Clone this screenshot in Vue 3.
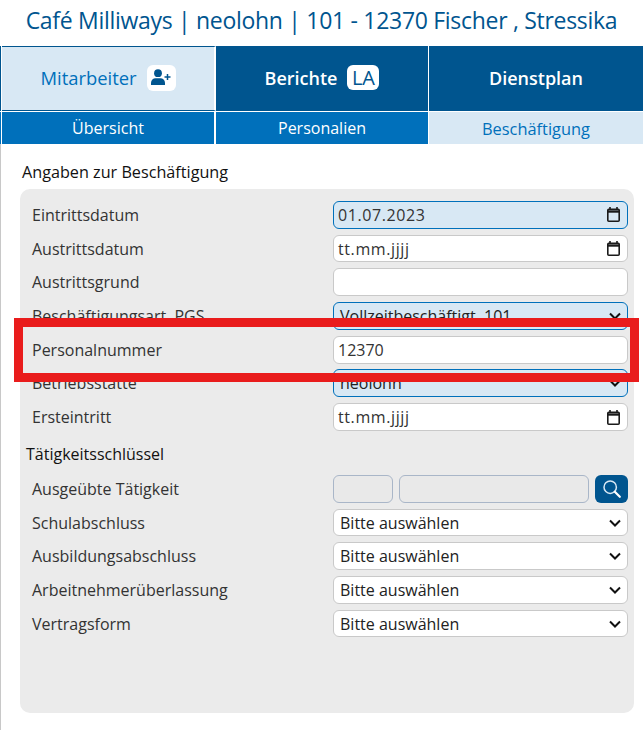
<script setup>
const mainTabs = [
  { label: 'Mitarbeiter', active: true, icon: 'user' },
  { label: 'Berichte', badge: 'LA' },
  { label: 'Dienstplan' }
]
const subTabs = [
  { label: 'Übersicht' },
  { label: 'Personalien' },
  { label: 'Beschäftigung', active: true }
]
const mainRows = [
  { label: 'Eintrittsdatum', value: '01.07.2023', icon: 'date', changed: true },
  { label: 'Austrittsdatum', value: 'tt.mm.jjjj', icon: 'date' },
  { label: 'Austrittsgrund', value: '' },
  { label: 'Beschäftigungsart, PGS', value: 'Vollzeitbeschäftigt, 101', icon: 'select', changed: true },
  { label: 'Personalnummer', value: '12370' },
  { label: 'Betriebsstätte', value: 'neolohn', icon: 'select', changed: true },
  { label: 'Ersteintritt', value: 'tt.mm.jjjj', icon: 'date' }
]
const keyRows = ['Schulabschluss', 'Ausbildungsabschluss', 'Arbeitnehmerüberlassung', 'Vertragsform']
</script>

<template>
  <div class="page">
    <h1 class="title">Café Milliways | neolohn | 101 - 12370 Fischer , Stressika</h1>

    <nav class="tabs main-tabs">
      <div v-for="tab in mainTabs" :key="tab.label" class="tab" :class="{ active: tab.active }">
        <span>{{ tab.label }}</span>
        <span v-if="tab.icon" class="badge">
          <svg width="20" height="17" viewBox="0 0 20 17">
            <circle cx="7" cy="4.200" r="3.900" fill="#00558f" />
            <path d="M0 16v-2C0 11 2.200 9.300 4.500 9.300h5C11.800 9.300 14 11 14 14v2z" fill="#00558f" />
            <path d="M16.500 5v6M13.500 8h6" stroke="#00558f" stroke-width="1.500" />
          </svg>
        </span>
        <span v-if="tab.badge" class="badge text-badge">{{ tab.badge }}</span>
      </div>
    </nav>
    <nav class="tabs sub-tabs">
      <div v-for="tab in subTabs" :key="tab.label" class="tab" :class="{ active: tab.active }">{{ tab.label }}</div>
    </nav>

    <div class="content">
      <h2 class="section-title">Angaben zur Beschäftigung</h2>
      <div class="panel">
        <div v-for="row in mainRows" :key="row.label" class="row">
          <span class="label">{{ row.label }}</span>
          <div class="field" :class="{ changed: row.changed, 'is-select': row.icon === 'select', 'is-date': row.icon === 'date' }">
            <span>{{ row.value }}</span>
            <svg v-if="row.icon === 'date'" width="13" height="15" viewBox="0 0 13 15">
              <path d="M3 0v3M10 0v3" stroke="#1a1a1a" stroke-width="1.600" />
              <rect x="0.800" y="2.300" width="11.400" height="11.900" rx="1" fill="none" stroke="#1a1a1a" stroke-width="1.600" />
              <path d="M1 4.500h11" stroke="#1a1a1a" stroke-width="2.400" />
            </svg>
            <svg v-if="row.icon === 'select'" class="chevron" width="12" height="8" viewBox="0 0 12 8">
              <path d="M1 1.500l5 5 5-5" fill="none" stroke="#111" stroke-width="2" />
            </svg>
          </div>
        </div>

        <h3 class="sub-title">Tätigkeitsschlüssel</h3>

        <div class="row">
          <span class="label">Ausgeübte Tätigkeit</span>
          <div class="search-group">
            <div class="disabled small"></div>
            <div class="disabled wide"></div>
            <div class="search-btn">
              <svg width="18" height="18" viewBox="0 0 18 18">
                <circle cx="7.200" cy="7.200" r="6.200" fill="none" stroke="#d8e8f4" stroke-width="1.500" />
                <path d="M11.800 11.800l5 5" stroke="#fff" stroke-width="2.200" stroke-linecap="round" />
              </svg>
            </div>
          </div>
        </div>
        <div v-for="label in keyRows" :key="label" class="row">
          <span class="label">{{ label }}</span>
          <div class="field is-select">
            <span>Bitte auswählen</span>
            <svg class="chevron" width="12" height="8" viewBox="0 0 12 8">
              <path d="M1 1.500l5 5 5-5" fill="none" stroke="#111" stroke-width="2" />
            </svg>
          </div>
        </div>
      </div>
    </div>

    <div class="highlight"></div>
  </div>
</template>

<style>
html, body {
  margin: 0;
  background: #fff;
}
</style>

<style scoped>
.page {
  position: relative;
  width: 643px;
  height: 730px;
  overflow: hidden;
  font-family: "Open Sans", "Noto Sans", sans-serif;
  color: #222;
}

.title {
  margin: 0;
  height: 46px;
  line-height: 41px;
  font-size: 23px;
  font-weight: 400;
  letter-spacing: -0.3px;
  text-align: center;
  color: #00558f;
  white-space: nowrap;
}

.tabs {
  display: grid;
  grid-template-columns: 214px 213px 214px;
  padding-left: 1px;
}

.tabs .tab:nth-child(1) {
  border-right: 2px solid #fff;
}

.tabs .tab:nth-child(2) {
  border-right: 1px solid #fff;
}

.main-tabs {
  height: 65px;
  border-left: 1px solid #00558f;
}

.main-tabs .tab {
  display: flex;
  align-items: center;
  justify-content: center;
  gap: 10px;
  padding-bottom: 2px;
  box-sizing: border-box;
  background: #00558f;
  color: #fff;
  font-size: 18px;
  font-weight: 600;
}

.main-tabs .tab.active {
  background: #d8e8f4;
  color: #0070bb;
  font-size: 18.400px;
  font-weight: 400;
  border-top: 1px solid #00558f;
  border-bottom: 1px solid #00558f;
}

.badge {
  display: flex;
  align-items: center;
  justify-content: center;
  width: 29px;
  height: 26px;
  border-radius: 6px;
  background: #fff;
  color: #00558f;
  font-weight: 400;
  font-size: 20px;
}

.text-badge {
  width: 32px;
  height: 25px;
}

.sub-tabs {
  height: 32px;
  margin-top: 1px;
  border-left: 1px solid #0070bb;
}

.sub-tabs .tab {
  display: flex;
  align-items: center;
  justify-content: center;
  background: #0070bb;
  color: #fff;
  font-size: 16px;
}

.sub-tabs .tab.active {
  background: #d8e8f4;
  color: #0070bb;
  font-size: 16.400px;
}

.content {
  height: 586px;
  padding: 18px 9px 0 20px;
  box-sizing: border-box;
  border-left: 1px solid #c8c8c8;
}

.section-title {
  margin: 0 0 7px 1px;
  height: 20px;
  line-height: 20px;
  font-size: 16.200px;
  font-weight: 400;
  color: #111;
}

.panel {
  height: 524px;
  margin-left: -1px;
  padding: 12px 6px 0 12px;
  box-sizing: border-box;
  background: #ebebeb;
  border-radius: 10px;
}

.row {
  display: flex;
  align-items: center;
  justify-content: space-between;
  height: 27.800px;
  margin-bottom: 5.900px;
}

.label {
  font-size: 16px;
  color: #333;
}

.field {
  display: flex;
  align-items: center;
  justify-content: space-between;
  width: 295px;
  height: 100%;
  box-sizing: border-box;
  padding: 0 7px 0 4px;
  background: #fff;
  border: 1px solid #c9c9c9;
  border-radius: 6px;
  font-size: 16px;
  color: #333;
}

.field.is-date {
  letter-spacing: 0.6px;
}

.field.is-select {
  padding: 0 6px 0 6px;
  color: #222;
}

.field.changed {
  background: #d8e8f4;
  border-color: #0070bb;
}

.sub-title {
  margin: 13px 0 11px -6px;
  height: 20px;
  line-height: 20px;
  font-size: 16px;
  font-weight: 400;
  color: #111;
}

.search-group {
  display: flex;
  gap: 6px;
  width: 295px;
  height: 100%;
}

.disabled {
  box-sizing: border-box;
  border: 1px solid #a9b6c8;
  border-radius: 6px;
  background: #e9e9e9;
}

.small {
  width: 60px;
}

.wide {
  width: 190px;
}

.search-btn {
  display: flex;
  align-items: center;
  justify-content: center;
  width: 33px;
  background: #00558f;
  border-radius: 6px;
}

.highlight {
  position: absolute;
  left: 14px;
  top: 318px;
  width: 625px;
  height: 64px;
  box-sizing: border-box;
  border: 9px solid #e91c1c;
}
</style>
